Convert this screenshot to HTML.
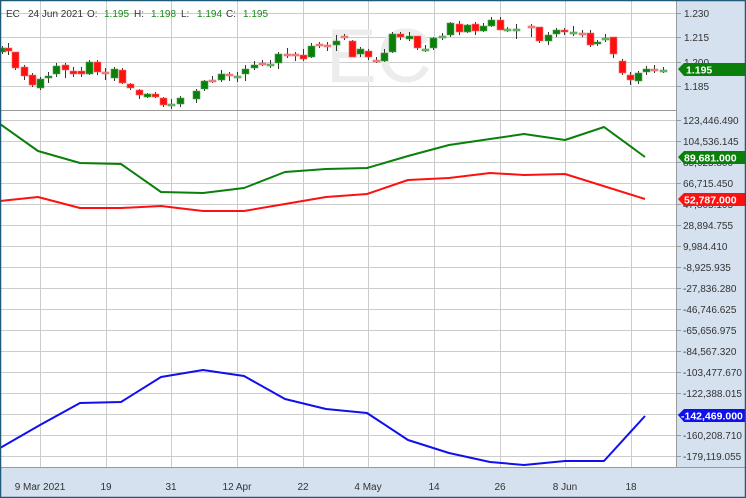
<!DOCTYPE html>
<html><head><meta charset="utf-8"><style>
html,body{margin:0;padding:0;background:#fff;}
svg{display:block;font-family:"Liberation Sans",sans-serif;}
</style></head><body>
<svg id="s" width="746" height="498" viewBox="0 0 746 498" xmlns="http://www.w3.org/2000/svg">
<rect x="0" y="0" width="746" height="498" fill="#fff"/>
<rect x="676" y="0" width="70" height="498" fill="#d6e1ef"/>
<rect x="0" y="467" width="746" height="31" fill="#d6e1ef"/>
<g id="grid" stroke="#cccccc" stroke-width="1"></g>
<line x1="0" y1="110.5" x2="676" y2="110.5" stroke="#9a9a9a"/>
<line x1="0" y1="467.5" x2="746" y2="467.5" stroke="#9a9a9a"/>
<line x1="676.5" y1="0" x2="676.5" y2="467" stroke="#9a9a9a"/>
<text x="326" y="82" font-size="76" fill="#ececec">EC</text>
<g id="candles"></g>
<g font-size="10" fill="#333">
<text x="6" y="17">EC</text><text x="28" y="17">24 Jun 2021</text>
<text x="87" y="17">O:</text><text x="104" y="17" fill="#1a8a1a">1.195</text>
<text x="134" y="17">H:</text><text x="151" y="17" fill="#1a8a1a">1.198</text>
<text x="181" y="17">L:</text><text x="197" y="17" fill="#1a8a1a">1.194</text>
<text x="226" y="17">C:</text><text x="243" y="17" fill="#1a8a1a">1.195</text>
</g>
<g fill="none" stroke-width="2" stroke-linejoin="round">
<polyline stroke="#0a800a" points="0,124 38,151 80,163 121,164 161,192 203,193 244,188 285,172 326,169 367,168 408,156 449,145 490,139 524,134 565,140 604,127 645,157"/>
<polyline stroke="#ff1010" points="0,201 38,197 80,208 121,208 161,206 203,211 244,211 285,204 326,197 367,194 408,180 449,178 490,173 524,175 565,174 645,199"/>
<polyline stroke="#1010ee" points="0,448 40,425 80,403 121,402 161,377 203,370 244,376 285,399 326,409 367,413 408,440 449,453 490,462 524,465 565,461 604,461 645,416"/>
</g>
<g id="ylab" font-size="10" fill="#333"></g>
<g font-size="10" fill="#333" text-anchor="middle">
<text x="40" y="490">9 Mar 2021</text><text x="106" y="490">19</text><text x="171" y="490">31</text><text x="237" y="490">12 Apr</text><text x="303" y="490">22</text><text x="368" y="490">4 May</text><text x="434" y="490">14</text><text x="500" y="490">26</text><text x="565" y="490">8 Jun</text><text x="631" y="490">18</text>
</g>
<g font-size="10.5" font-weight="bold" fill="#fff">
<path d="M678,69 L684,63 L745,63 L745,76 L684,76 Z" fill="#0a800a"/><text x="686" y="73.5">1.195</text>
<path d="M678,157 L684,151 L745,151 L745,164 L684,164 Z" fill="#0a800a"/><text x="684" y="161.5">89,681.000</text>
<path d="M678,199 L684,193 L745,193 L745,206 L684,206 Z" fill="#ff1010"/><text x="684" y="203.5">52,787.000</text>
<path d="M678,415 L684,409 L745,409 L745,422 L684,422 Z" fill="#1010ee"/><text x="681" y="419.5">-142,469.000</text>
</g>
<rect x="0.5" y="0.5" width="745" height="497" fill="none" stroke="#1e5a78" stroke-width="1.5"/>
</svg>
<script>
var ns="http://www.w3.org/2000/svg";
function el(p,t,a,txt){var e=document.createElementNS(ns,t);for(var k in a)e.setAttribute(k,a[k]);if(txt)e.textContent=txt;p.appendChild(e);return e;}
var g=document.getElementById('grid');
[40,106,171,237,303,368,434,500,565,631].forEach(function(x){el(g,'line',{x1:x+.5,y1:0,x2:x+.5,y2:467});});
var yl=document.getElementById('ylab');
[[13,"1.230"],[37,"1.215"],[62,"1.200"],[86,"1.185"]].forEach(function(a){el(g,'line',{x1:0,y1:a[0]+.5,x2:676,y2:a[0]+.5});el(yl,'text',{x:684,y:a[0]+4},a[1]);el(g,'line',{x1:677,y1:a[0]+.5,x2:681,y2:a[0]+.5,stroke:'#999'});});
var labs=["123,446.490","104,536.145","85,625.800","66,715.450","47,805.105","28,894.755","9,984.410","-8,925.935","-27,836.280","-46,746.625","-65,656.975","-84,567.320","-103,477.670","-122,388.015","-141,298.360","-160,208.710","-179,119.055"];
labs.forEach(function(l,i){var y=Math.round(120+i*21);el(g,'line',{x1:0,y1:y+.5,x2:676,y2:y+.5});el(g,'line',{x1:677,y1:y+.5,x2:681,y2:y+.5,stroke:'#999'});el(yl,'text',{x:683,y:y+4},l);});
var c=[[2,48,52,46,54,1],[8,48,51,43,55,0],[15,52,68,52,70,0],[24,67,76,65,80,0],[32,75,85,73,87,0],[40,79,88,77,90,1],[48,76,78,72,83,1],[56,66,74,63,77,1],[65,65,70,63,78,0],[73,71,74,67,77,0],[81,71,74,67,77,0],[89,62,74,60,75,1],[97,62,72,60,75,0],[105,72,73,68,80,0],[114,69,78,67,81,1],[122,70,83,68,84,0],[130,84,88,83,90,0],[139,90,95,89,99,0],[147,94,97,93,98,1],[155,94,97,92,98,0],[163,98,105,97,107,0],[171,104,105,99,109,1],[180,98,104,96,107,1],[196,91,99,89,103,1],[204,81,89,80,91,1],[212,80,81,76,83,0],[221,74,80,70,82,1],[229,74,75,72,81,0],[237,76,77,72,82,1],[245,69,74,65,81,1],[254,65,68,61,70,1],[262,63,64,60,66,0],[270,64,65,60,68,1],[278,54,63,52,69,1],[287,54,55,48,58,0],[295,54,55,52,61,0],[303,55,59,49,61,0],[311,46,57,43,58,1],[319,44,45,42,48,0],[327,45,46,42,51,0],[336,41,45,35,51,1],[344,36,37,34,40,0],[352,41,57,40,57,0],[360,49,54,47,57,1],[368,51,57,49,60,0],[376,60,61,57,63,0],[384,53,61,49,62,1],[392,34,52,32,53,1],[400,34,37,32,40,0],[409,36,39,32,41,1],[417,36,48,36,50,0],[425,49,50,45,52,1],[433,38,48,37,50,1],[442,36,37,33,40,1],[450,23,35,22,37,1],[459,24,32,21,35,0],[467,25,32,24,33,1],[475,24,31,22,35,0],[483,26,31,23,32,1],[491,20,26,17,27,1],[500,20,30,17,30,0],[507,29,30,27,32,1],[516,29,30,24,39,1],[531,26,27,24,37,0],[539,27,41,27,43,0],[548,35,41,32,45,1],[556,30,34,28,37,1],[564,30,32,28,35,0],[573,32,33,26,36,1],[582,33,34,30,37,0],[590,33,45,30,47,0],[597,42,44,40,46,1],[605,38,39,34,42,1],[613,37,54,37,58,0],[622,61,73,59,75,0],[630,75,80,72,85,0],[638,73,81,71,84,1],[646,69,72,66,75,1],[654,69,70,65,73,0],[663,70,71,67,73,1]];
var cg=document.getElementById('candles');
c.forEach(function(k){var doji=(k[2]-k[1])<=1;var col=k[5]?(doji?'#6cb86c':'#0a800a'):(doji?'#f08080':'#ff1010');
el(cg,'line',{x1:k[0]+.5,y1:k[3],x2:k[0]+.5,y2:k[4],stroke:'#333','stroke-width':1});
el(cg,'rect',{x:k[0]-3,y:k[1],width:7,height:Math.max(2,k[2]-k[1]),fill:col,stroke:k[5]?'#5aa05a':'#f07070','stroke-width':0.6});});
</script>
</body></html>
